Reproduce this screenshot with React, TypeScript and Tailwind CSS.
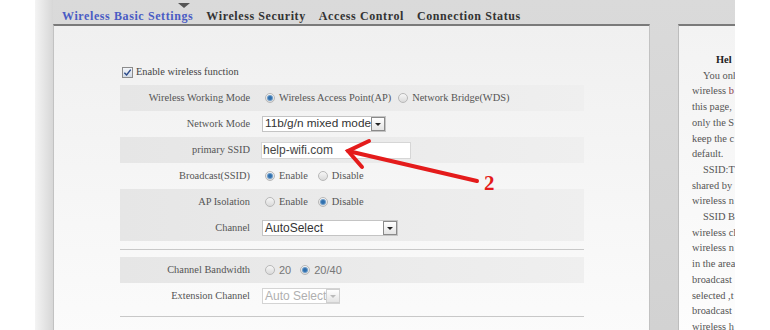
import React from "react";

const serif = "font-['Liberation_Serif','Times_New_Roman',serif]";
const sans = "font-['Liberation_Sans',Arial,sans-serif]";

function Radio({ on }: { on?: boolean }) {
  return (
    <span className="flex h-[10px] w-[10px] shrink-0 items-center justify-center rounded-full border border-[#b8b8b8] bg-gradient-to-b from-[#f6f6f6] to-[#dadada]">
      {on && <span className="h-[4px] w-[4px] rounded-full bg-[#2f6fae] ring-1 ring-[#6d9cc8]" />}
    </span>
  );
}

function Option({ on, label, font = serif }: { on?: boolean; label: string; font?: string }) {
  return (
    <span className="flex items-center gap-[4px] whitespace-nowrap">
      <Radio on={on} />
      <span className={font}>{label}</span>
    </span>
  );
}

function Arrow({ dim }: { dim?: boolean }) {
  return (
    <span
      className={`flex h-[14px] w-[14px] shrink-0 items-center justify-center border bg-gradient-to-b from-white to-[#e4e4e4] ${
        dim ? "border-[#d0d0d0]" : "border-[#8a8a8a]"
      }`}
    >
      <span
        className={`h-0 w-0 border-x-[3px] border-t-[3px] border-x-transparent ${
          dim ? "border-t-[#bbb]" : "border-t-[#222]"
        }`}
      />
    </span>
  );
}

type Row = { label: string; shade: boolean; value: React.ReactNode };

const rowsTop: Row[] = [
  {
    label: "Wireless Working Mode",
    shade: true,
    value: (
      <div className="ml-[3px] flex items-center gap-[7px]">
        <Option on label="Wireless Access Point(AP)" />
        <Option label="Network Bridge(WDS)" />
      </div>
    ),
  },
  {
    label: "Network Mode",
    shade: false,
    value: (
      <div className="flex h-[16px] w-[124px] items-center border border-[#c4c4c4] bg-white">
        <span className={`${sans} whitespace-nowrap pl-[2px] text-[11.8px] text-[#333]`}>11b/g/n mixed mode</span>
        <span className="ml-auto">
          <Arrow />
        </span>
      </div>
    ),
  },
  {
    label: "primary SSID",
    shade: true,
    value: (
      <div className="-ml-[1px] flex h-[17px] w-[150px] items-center border border-[#d6d6d6] bg-white">
        <span className={`${sans} whitespace-nowrap pl-[1px] text-[12px] text-[#444]`}>help-wifi.com</span>
      </div>
    ),
  },
  {
    label: "Broadcast(SSID)",
    shade: false,
    value: (
      <div className="ml-[3px] flex items-center gap-[10px]">
        <Option on label="Enable" />
        <Option label="Disable" />
      </div>
    ),
  },
  {
    label: "AP Isolation",
    shade: true,
    value: (
      <div className="ml-[3px] flex items-center gap-[10px]">
        <Option label="Enable" />
        <Option on label="Disable" />
      </div>
    ),
  },
  {
    label: "Channel",
    shade: true,
    value: (
      <div className="flex h-[16px] w-[136px] items-center border border-[#c4c4c4] bg-white">
        <span className={`${sans} whitespace-nowrap pl-[2px] text-[12px] text-[#333]`}>AutoSelect</span>
        <span className="ml-auto">
          <Arrow />
        </span>
      </div>
    ),
  },
];

const rowsBottom: Row[] = [
  {
    label: "Channel Bandwidth",
    shade: true,
    value: (
      <div className="ml-[3px] flex items-center gap-[9px] text-[11px] text-[#777]">
        <Option label="20" font={sans} />
        <Option on label="20/40" font={sans} />
      </div>
    ),
  },
  {
    label: "Extension Channel",
    shade: false,
    value: (
      <div className="flex h-[16px] w-[78px] items-center border border-[#d4d4d4] bg-white">
        <span className={`${sans} whitespace-nowrap pl-[2px] text-[12px] text-[#b0b0b0]`}>Auto Select</span>
        <span className="ml-auto">
          <Arrow dim />
        </span>
      </div>
    ),
  },
];

function FormRow({ row }: { row: Row }) {
  return (
    <div
      className={`flex h-[26px] items-center ${
        row.shade ? "bg-gradient-to-r from-[#e6e6e6] to-[#efefef]" : ""
      }`}
    >
      <div className="w-[136px] whitespace-nowrap pr-[6px] text-right text-[#555]">{row.label}</div>
      <div className="pl-[6px] text-[#555]">{row.value}</div>
    </div>
  );
}

// help text as far as it shows before the picture edge
const help = [
  "You onl",
  "wireless b",
  "this page,",
  "only the S",
  "keep the c",
  "default.",
  "SSID:T",
  "shared by",
  "wireless n",
  "SSID B",
  "wireless cl",
  "wireless n",
  "in the area",
  "broadcast",
  "selected ,t",
  "broadcast",
  "wireless h",
];
const indented = [0, 6, 9];

export default function App() {
  return (
    <div className={`relative flex h-[330px] w-[770px] overflow-hidden bg-white ${serif} text-[10.4px]`}>
      <div className="w-[35px] bg-white" />
      <div className="w-[18px] bg-gradient-to-r from-[#f4f4f4] to-[#d7d7d7]" />

      <div className="flex w-[682px] flex-col bg-gradient-to-b from-[#dadada] to-[#d2d2d2]">
        {/* top bar with pointer under active tab */}
        <div className="relative ml-[2px] h-[3px] w-[593px] bg-[#555]">
          <span className="absolute left-[123px] top-[3px] h-0 w-0 border-x-[6px] border-t-[5px] border-x-transparent border-t-[#555]" />
        </div>

        <div className="flex h-[24px] items-center gap-[13px] pl-[9px] pt-[8px] text-[12px] font-bold tracking-[0.6px] text-[#333]">
          <span className="text-[#4a5cc4]">Wireless Basic Settings</span>
          <span>Wireless Security</span>
          <span>Access Control</span>
          <span>Connection Status</span>
        </div>

        <div className="flex flex-1">
          {/* main form panel */}
          <div className="w-[597px] border-x border-t-2 border-x-[#c2c2c2] border-t-[#7a7a7a] bg-gradient-to-b from-[#f0f0f0] to-[#fbfbfb] pl-[66px] pt-[40px]">
            <div className="flex h-[12px] items-center gap-[3px] pl-[2px] text-[#444]">
              <span className="flex h-[11px] w-[11px] items-center justify-center border border-[#8c8c8c] bg-gradient-to-b from-[#f2f5f9] to-[#d3dbe6]">
                <svg viewBox="0 0 10 10" className="h-[9px] w-[9px]">
                  <path d="M1.5 5.2 L4 7.8 L8.6 1.8" fill="none" stroke="#2b4a8a" strokeWidth="1.6" />
                </svg>
              </span>
              <span>Enable wireless function</span>
            </div>

            <div className="mt-[7px] w-[464px]">
              {rowsTop.map((r) => (
                <FormRow key={r.label} row={r} />
              ))}
              <div className="mt-[8px] h-px bg-[#c8c8c8]" />
              <div className="mt-[7px]">
                {rowsBottom.map((r) => (
                  <FormRow key={r.label} row={r} />
                ))}
              </div>
              <div className="mt-[7px] h-px bg-[#c8c8c8]" />
            </div>
          </div>

          <div className="w-[28px]" />

          {/* help panel, cut at the picture edge */}
          <div className="w-[57px] overflow-hidden border-l border-t-2 border-l-[#bdbdbd] border-t-[#7a7a7a] bg-gradient-to-b from-[#f3f3f3] to-[#fdfdfd]">
            <div className="whitespace-nowrap pl-[13px] pt-[26px] leading-[15.7px] text-[#555]">
              <div className="pl-[24px] font-bold text-[#222]">Hel</div>
              {help.map((l, i) => (
                <div key={i} className={indented.includes(i) ? "pl-[11px]" : ""}>
                  {i === 1 ? (
                    <>
                      wireless <span className="text-[#8a3a4a]">b</span>
                    </>
                  ) : (
                    l
                  )}
                </div>
              ))}
            </div>
          </div>
        </div>
      </div>

      <div className="flex-1 bg-white" />

      {/* red annotation arrow */}
      <svg className="absolute left-0 top-0" width="770" height="330">
        <g stroke="#e41b1b" strokeWidth="4" strokeLinecap="round" fill="none">
          <path d="M348 151 L477 181" />
          <path d="M369 141 L348 151 L362 167" strokeLinejoin="miter" />
        </g>
      </svg>
      <span className="absolute left-[484px] top-[173px] text-[21px] font-bold leading-none text-[#e41b1b]">2</span>
    </div>
  );
}
